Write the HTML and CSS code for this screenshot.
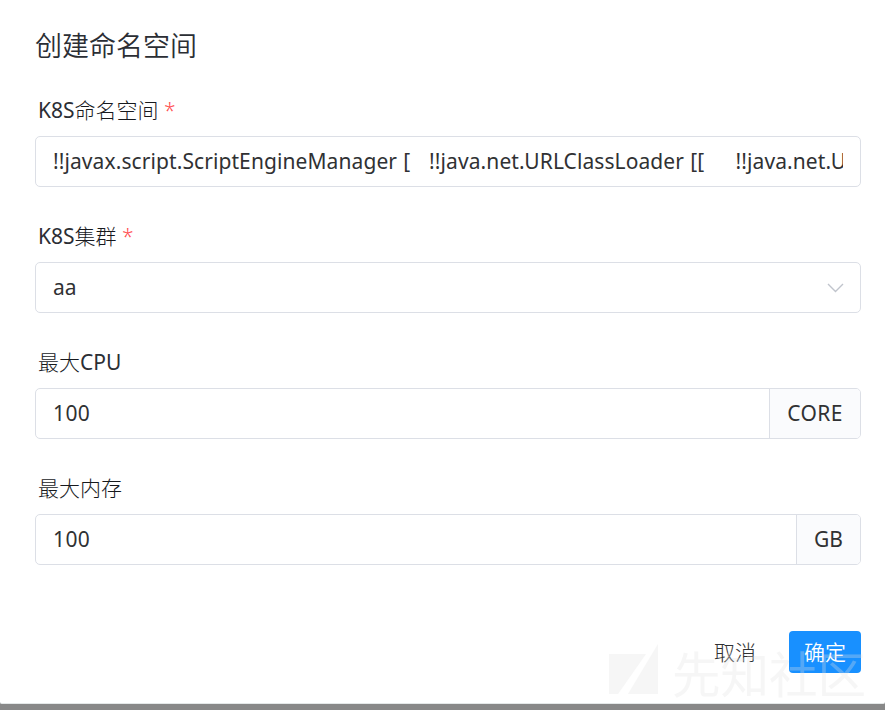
FILE: index.html
```html
<!DOCTYPE html>
<html lang="zh-CN">
<head>
<meta charset="utf-8">
<title>创建命名空间</title>
<link rel="stylesheet" href="styles.css">
</head>
<body>
<main class="dialog">
  <h1 class="title">创建命名空间</h1>
  <form class="form">
    <div class="field">
      <div class="label"><span class="latin">K8S</span>命名空间 <span class="required">*</span></div>
      <div class="control"><div class="value long">!!javax.script.ScriptEngineManager [   !!java.net.URLClassLoader [[     !!java.net.U</div></div>
    </div>
    <div class="field">
      <div class="label"><span class="latin">K8S</span>集群 <span class="required">*</span></div>
      <div class="control"><div class="value">aa</div>
        <svg class="chevron" viewBox="0 0 17 10"><path d="M1 1l7.5 7.5L16 1"/></svg>
      </div>
    </div>
    <div class="field">
      <div class="label">最大<span class="latin">CPU</span></div>
      <div class="control"><div class="value number">100</div><div class="unit core">CORE</div></div>
    </div>
    <div class="field">
      <div class="label">最大内存</div>
      <div class="control"><div class="value number">100</div><div class="unit gb">GB</div></div>
    </div>
  </form>
  <footer class="actions">
    <button class="btn" type="button">取消</button>
    <button class="btn primary" type="button">确定</button>
  </footer>
  <div class="watermark">
    <svg class="mark" viewBox="0 0 50 52"><path d="M0 10H37L9 50H0zM49 0V50H19z"/></svg>
    <span class="community">先知社区</span>
  </div>
</main>
</body>
</html>
```
FILE: styles.css
```css
* { box-sizing: border-box; }
body {
  margin: 0;
  height: 710px;
  overflow: hidden;
  background: #888;
  font-family: "Noto Sans", "Noto Sans CJK SC", sans-serif;
  font-size: 21px;
  color: #303133;
}
.dialog {
  position: relative;
  height: 704px;
  padding: 26px 24px 0 35px;
  background: #fff;
  border-bottom: 1px solid #e4e8e8;
  border-radius: 0 0 2px 2px;
}
.title {
  margin: 0;
  height: 40px;
  line-height: 40px;
  font-size: 27px;
  font-weight: 350;
  color: #2b2e34;
}
.form { padding-top: 28px; }
.field { height: 126px; }
.label {
  height: 42px;
  padding-left: 3px;
  line-height: 32px;
  font-size: 21px;
  font-weight: 300;
  color: #17191d;
}
.latin { font-weight: 400; color: #2b2e34; }
.required { color: #ff4d4f; font-weight: 300; }
.control {
  display: flex;
  align-items: center;
  height: 51px;
  border: 1px solid #dcdfe6;
  border-radius: 5px;
  overflow: hidden;
}
.value {
  flex: 1;
  min-width: 0;
  margin: 0 17px;
  overflow: hidden;
  line-height: 46px;
  height: 48px;
  white-space: pre;
}
.long { letter-spacing: .09px; word-spacing: .7px; }
.number { letter-spacing: .4px; }
.chevron {
  width: 17px;
  height: 10px;
  margin-right: 16px;
  fill: none;
  stroke: #c0c4cc;
  stroke-width: 1.4;
}
.unit {
  height: 49px;
  line-height: 48px;
  text-align: center;
  background: #fafbfd;
  border-left: 1px solid #dcdfe6;
}
.core { width: 91px; letter-spacing: .4px; }
.gb { width: 64px; }
.actions {
  display: flex;
  justify-content: flex-end;
  gap: 18px;
  padding-top: 33px;
}
.btn {
  width: 72px;
  height: 42px;
  padding: 0;
  border: 0;
  border-radius: 4px;
  background: transparent;
  font: inherit;
  font-weight: 300;
  line-height: 42px;
  color: #303133;
}
.primary { background: #1890ff; color: #fff; font-weight: 350; }
.watermark {
  position: absolute;
  left: 609px;
  top: 644px;
  display: flex;
  height: 60px;
  opacity: .3;
  pointer-events: none;
}
.mark { width: 50px; height: 52px; fill: #e2e2e2; }
.community {
  margin-left: 13px;
  line-height: 60px;
  font-size: 48.5px;
  font-weight: 400;
  color: #e2e2e2;
  white-space: nowrap;
}
```
